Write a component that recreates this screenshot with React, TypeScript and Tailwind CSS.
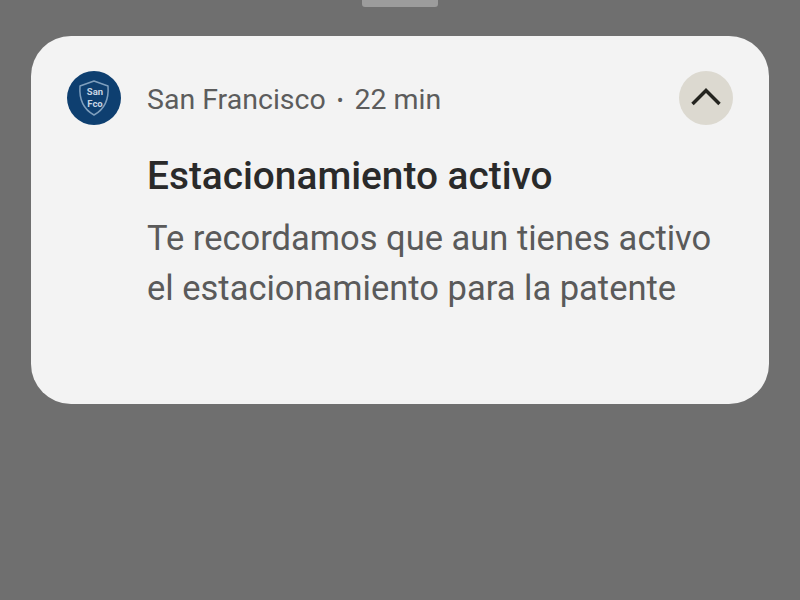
function App() {
  return (
    <div className="h-[600px] w-[800px] overflow-hidden bg-[#6f6f6f] font-['Roboto',sans-serif]">
      <div className="mx-auto h-[7px] w-[76px] rounded-b-[3px] bg-[#9c9c9c]" />
      <div className="mx-[31px] mt-[29px] h-[368px] rounded-[40px] bg-[#f3f3f3] pl-[36px] pr-[36px] pt-[35px]">
        <div className="flex h-[54px] items-center">
          <div className="flex h-[54px] w-[54px] items-center justify-center rounded-full bg-[#0e3f70]">
            <svg viewBox="0 0 54 54" className="h-[54px] w-[54px]">
              <path
                d="M27 10 L41 15 C42 28 38 38 27 44 C16 38 12 28 13 15 Z"
                fill="none"
                stroke="#7f9fbd"
                strokeWidth="1.5"
                strokeLinejoin="round"
              />
              <text x="28" y="24" textAnchor="middle" fontSize="9.5" fontWeight="700" fill="#c6d5e3" fontFamily="Roboto, sans-serif">
                San
              </text>
              <text x="28" y="36" textAnchor="middle" fontSize="9.5" fontWeight="700" fill="#c6d5e3" fontFamily="Roboto, sans-serif">
                Fco
              </text>
            </svg>
          </div>
          <div className="ml-[26px] flex items-center pt-[4px] text-[28.5px] text-[#5c5c5c]">
            <span>San Francisco</span>
            <span className="mx-[11px] text-[20px]">•</span>
            <span>22 min</span>
          </div>
          <button className="ml-auto flex h-[54px] w-[54px] items-center justify-center rounded-full bg-[#dcd9d0]">
            <svg viewBox="0 0 30 20" className="mb-[3px] h-[20px] w-[30px]">
              <path d="M1.5 17 L15 3.5 L28.5 17" fill="none" stroke="#24241f" strokeWidth="3.5" />
            </svg>
          </button>
        </div>
        <div className="ml-[80px] mt-[28px]">
          <h1 className="text-[38.8px] font-medium leading-[46px] text-[#2a2a2a]">Estacionamiento activo</h1>
          <p className="mt-[14px] text-[34.5px] leading-[50px] text-[#5a5a5a]">
            Te recordamos que aun tienes activo
            <br />
            el estacionamiento para la patente
          </p>
        </div>
      </div>
    </div>
  );
}

export default App;
